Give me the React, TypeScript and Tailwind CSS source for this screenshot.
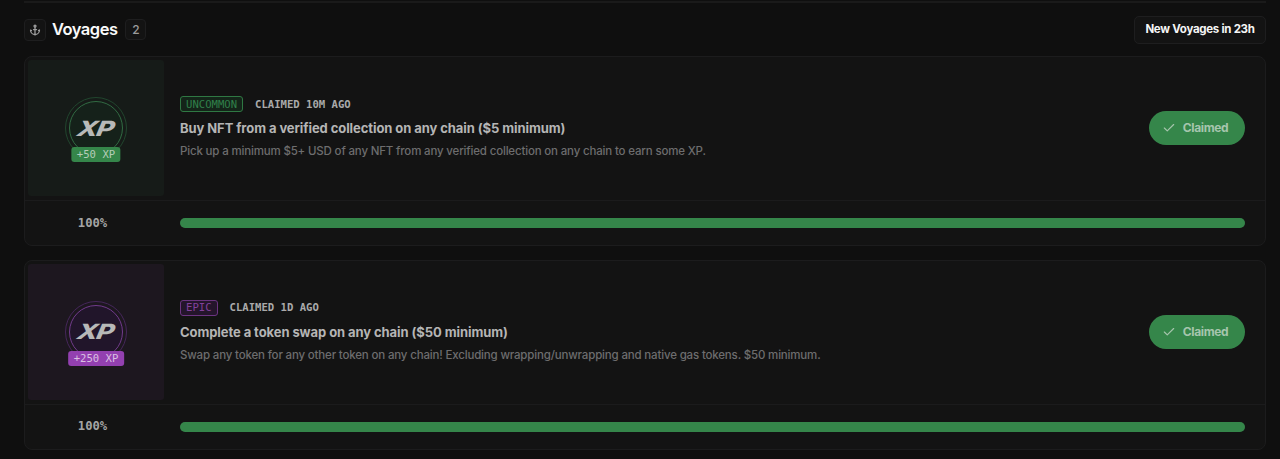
import { Anchor, Check } from 'lucide-react';

type Voyage = {
    rarity: string;
    claimed: string;
    title: string;
    description: string;
    xp: number;
    progress: number;
    color: 'green' | 'purple';
};

const voyages: Voyage[] = [
    {
        rarity: 'Uncommon',
        claimed: 'Claimed 10m ago',
        title: 'Buy NFT from a verified collection on any chain ($5 minimum)',
        description: 'Pick up a minimum $5+ USD of any NFT from any verified collection on any chain to earn some XP.',
        xp: 50,
        progress: 100,
        color: 'green',
    },
    {
        rarity: 'Epic',
        claimed: 'Claimed 1d ago',
        title: 'Complete a token swap on any chain ($50 minimum)',
        description: 'Swap any token for any other token on any chain! Excluding wrapping/unwrapping and native gas tokens. $50 minimum.',
        xp: 250,
        progress: 100,
        color: 'purple',
    },
];

const themes = {
    green: {
        tile: 'bg-[#161b18]',
        outer: 'border-[#21462e]',
        inner: 'border-[#316b43] bg-[#15211a]',
        xp: 'bg-[#35864a] text-[#b4cdb9]',
        tag: 'border-[#2f7843] bg-[#142419] text-[#30804a]',
    },
    purple: {
        tile: 'bg-[#1d171f]',
        outer: 'border-[#45265a]',
        inner: 'border-[#713b8b] bg-[#21152a]',
        xp: 'bg-[#9340b0] text-[#dabfe2]',
        tag: 'border-[#6c3481] bg-[#24152b] text-[#83419b]',
    },
};

function XpBadge({ voyage }: { voyage: Voyage }) {
    const theme = themes[voyage.color];

    return (
        <div className={`w-[136px] h-[136px] rounded-[3px] flex items-center justify-center ${theme.tile}`}>
            <div className={`relative w-[62px] h-[62px] rounded-full border p-[3px] ${theme.outer}`}>
                <div className={`w-full h-full rounded-full border flex items-center justify-center ${theme.inner}`}>
                    <span className="font-['Inter'] font-extrabold text-[21px] leading-none tracking-[-1px] text-[#b8b9b8] scale-x-[1.28] -skew-x-[18deg]">
                        XP
                    </span>
                </div>
                <span
                    className={`absolute left-1/2 -translate-x-1/2 top-[49px] h-[15px] px-[5.5px] rounded-[3px] flex items-center whitespace-pre font-['DejaVu_Sans_Mono'] text-[10.6px] leading-none ${theme.xp}`}
                >
                    +{voyage.xp} XP
                </span>
            </div>
        </div>
    );
}

function VoyageCard({ voyage }: { voyage: Voyage }) {
    const theme = themes[voyage.color];

    return (
        <div className="h-[190px] rounded-lg border border-[#1c1c1d] bg-[#131313]">
            <div className="h-[144px] flex items-center pl-[3px] pr-5 pb-px border-b border-[#1b1b1c]">
                <XpBadge voyage={voyage} />
                <div className="flex-1 ml-4 flex flex-col items-start">
                    <div className="flex items-center gap-3 font-['DejaVu_Sans_Mono'] uppercase text-[10.6px] leading-none">
                        <span className={`h-4 px-[5px] rounded-[3px] border flex items-center ${theme.tag}`}>
                            {voyage.rarity}
                        </span>
                        <span className="font-bold text-[#aaaaaa]">{voyage.claimed}</span>
                    </div>
                    <h3 className="mt-[7px] font-bold text-[13px] leading-[18px] tracking-[-0.08px] text-[#b5b5b5]">
                        {voyage.title}
                    </h3>
                    <p className="mt-[5px] font-medium text-[11.5px] leading-[18px] tracking-[-0.17px] text-[#6d6d6e]">
                        {voyage.description}
                    </p>
                </div>
                <button className="w-[96px] h-[34px] rounded-full bg-[#35864a] text-[#a6c5ad] flex items-center justify-center gap-[7px] pr-1 text-xs tracking-[-0.35px] font-bold">
                    <Check className="w-[14px] h-[14px]" strokeWidth={2} />
                    Claimed
                </button>
            </div>

            {/* Progress */}
            <div className="h-[44px] flex items-center pr-5">
                <span className="w-[135px] mr-5 text-center font-['DejaVu_Sans_Mono'] font-bold text-[12.2px] text-[#a5a5a5]">
                    {voyage.progress}%
                </span>
                <div className="flex-1 h-[10px] rounded-full bg-[#1c1c1d]">
                    <div className="h-full rounded-full bg-[#35864a]" style={{ width: `${voyage.progress}%` }} />
                </div>
            </div>
        </div>
    );
}

export default function App() {
    return (
        <div className="h-[459px] overflow-hidden bg-[#0f0f0f] pl-6 pr-[14px] pt-px font-['Inter',sans-serif]">
            <div className="h-[2px] bg-[#1a1a1a]" />

            {/* Section header */}
            <div className="h-[53px] flex items-center justify-between">
                <div className="flex items-center">
                    <div className="w-[22px] h-[22px] rounded-[4px] border border-[#1e1e1f] bg-[#131313] flex items-center justify-center text-[#a0a0a0]">
                        <Anchor className="w-3 h-3" strokeWidth={2.5} />
                    </div>
                    <h2 className="ml-[6px] mr-px text-[16.5px] tracking-[-0.5px] font-semibold text-[#fafafa]">Voyages</h2>
                    <span className="ml-[7px] w-[21px] h-[21px] rounded-[4px] border border-[#1e1e1f] bg-[#131313] flex items-center justify-center text-xs font-medium text-[#9b9b9b]">
                        {voyages.length}
                    </span>
                </div>
                <div className="w-[132px] h-[28px] rounded-[5px] border border-[#1e1e1f] bg-[#131313] flex items-center justify-center text-[11.5px] tracking-[-0.28px] font-bold text-[#f5f5f5]">
                    New Voyages in 23h
                </div>
            </div>

            <div className="flex flex-col gap-[13.5px]">
                {voyages.map((voyage) => (
                    <VoyageCard key={voyage.title} voyage={voyage} />
                ))}
            </div>
        </div>
    );
}
